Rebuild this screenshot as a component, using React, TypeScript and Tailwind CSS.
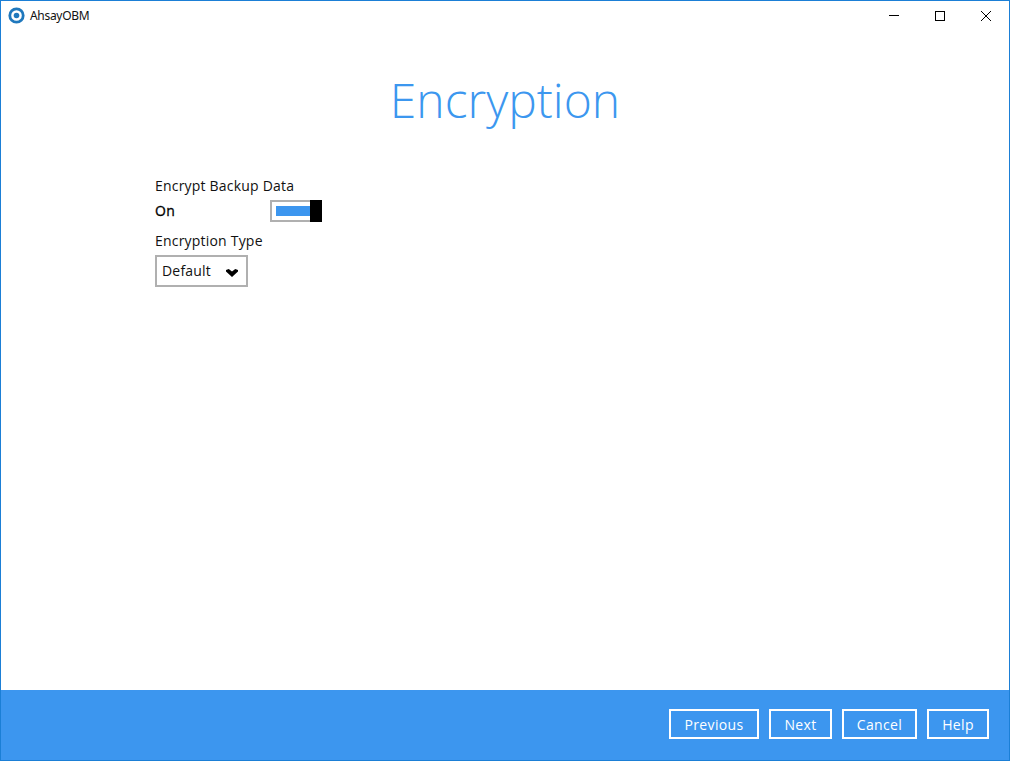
export default function App() {
  return (
    <div className="w-[1010px] h-[761px] flex flex-col bg-white border border-[#1b7fd6] overflow-hidden font-['Open_Sans','Noto_Sans',sans-serif] text-[#111]">
      <div className="h-[29px] flex items-center justify-between">
        <div className="flex items-center pl-[7px] gap-[5px]">
          <svg width="17" height="17" viewBox="0 0 17 17">
            <circle cx="8.5" cy="8.5" r="6.7" fill="none" stroke="#1f78bd" strokeWidth="2.8" />
            <circle cx="8.5" cy="8.5" r="2.8" fill="#1f78bd" />
          </svg>
          <span className="text-[12px] leading-none tracking-[-0.3px] font-['Noto_Sans',sans-serif]">AhsayOBM</span>
        </div>
        <div className="flex items-center">
          <div className="w-[46px] h-[29px] flex items-center justify-center">
            <div className="w-[10px] h-px bg-black" />
          </div>
          <div className="w-[46px] h-[29px] flex items-center justify-center">
            <div className="w-[10px] h-[10px] border border-black" />
          </div>
          <div className="w-[46px] h-[29px] flex items-center justify-center">
            <svg width="10" height="10" viewBox="0 0 10 10" stroke="#000" strokeWidth="1">
              <path d="M0 0L10 10M10 0L0 10" />
            </svg>
          </div>
        </div>
      </div>

      <div className="flex-1 flex flex-col">
        <h1 className="mt-[35px] text-center text-[48px] leading-[70px] font-light text-[#3c97ef]">Encryption</h1>
        <div className="pl-[154px] mt-[41px] flex flex-col items-start text-[14px] tracking-[0.2px]">
          <div className="leading-[19px]">Encrypt Backup Data</div>
          <div className="mt-[5px] w-[167px] flex items-center justify-between">
            <span className="leading-[22px] tracking-[0.4px] text-black [-webkit-text-stroke:0.3px_black]">On</span>
            <div className="w-[52px] h-[22px] border-2 border-[#b0b0b0] flex items-center pl-[4px] relative">
              <div className="w-[34px] h-[10px] bg-[#3c96ef]" />
              <div className="absolute right-[-2px] top-[-2px] w-[12px] h-[22px] bg-black" />
            </div>
          </div>
          <div className="mt-[9px] leading-[19px]">Encryption Type</div>
          <div className="mt-[5px] w-[93px] h-[32px] border-2 border-[#b0b0b0] flex items-center pl-[5px] pb-[2px] gap-[15px]">
            <span>Default</span>
            <svg width="12" height="8" viewBox="0 0 13 8" preserveAspectRatio="none" className="mt-[6px]">
              <path d="M0 1L3 0L6.5 2.5L10 0L13 1L13 2.5L6.5 8L0 2.5Z" fill="#000" />
            </svg>
          </div>
        </div>
      </div>

      <div className="h-[70px] bg-[#3c96ef] flex items-center justify-end pr-[20px] pb-[2px] gap-[10px] text-white text-[14px] tracking-[0.35px]">
        <div className="w-[90px] h-[30px] border-2 border-white flex items-center justify-center">Previous</div>
        <div className="w-[63px] h-[30px] border-2 border-white flex items-center justify-center">Next</div>
        <div className="w-[75px] h-[30px] border-2 border-white flex items-center justify-center">Cancel</div>
        <div className="w-[62px] h-[30px] border-2 border-white flex items-center justify-center">Help</div>
      </div>
    </div>
  );
}
